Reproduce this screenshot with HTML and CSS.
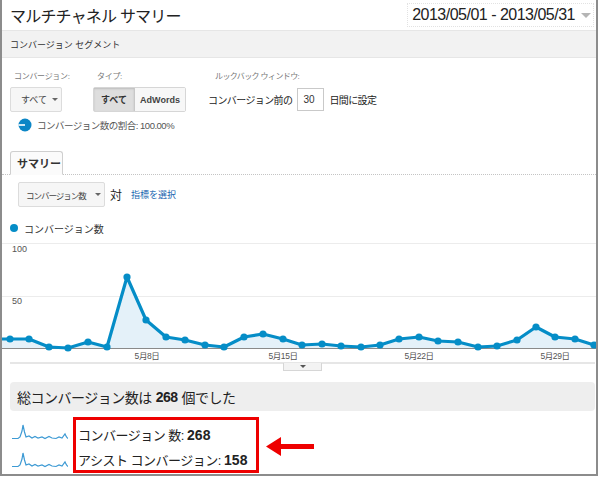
FILE: index.html
```html
<!DOCTYPE html>
<html lang="ja">
<head>
<meta charset="utf-8">
<title>マルチチャネル サマリー</title>
<link rel="stylesheet" href="styles.css">
</head>
<body>
<div class="frame">
  <div class="header">
    <div class="title">マルチチャネル サマリー</div>
    <div class="date"><span>2013/05/01 - 2013/05/31</span><span class="caret"></span></div>
  </div>
  <div class="segbar">コンバージョン セグメント</div>

  <div class="controls">
    <div class="lbl l1">コンバージョン:</div>
    <div class="lbl l2">タイプ:</div>
    <div class="lbl l3">ルックバック ウィンドウ:</div>
    <div class="btn sel">すべて <span class="tri"></span></div>
    <div class="toggle"><span class="on">すべて</span><span class="off">AdWords</span></div>
    <div class="lookback"><span>コンバージョン前の</span><span class="input">30</span><span>日間に設定</span></div>
  </div>

  <div class="share">
    <svg class="pie" width="14" height="14" viewBox="0 0 14 14"><circle cx="7" cy="7" r="6.5" fill="#0b86c6"/><line x1="0.5" y1="7" x2="7" y2="7" stroke="#fff" stroke-width="1.6"/></svg>
    <span>コンバージョン数の割合: 100.00%</span>
  </div>

  <div class="tabs"><div class="tab">サマリー</div></div>

  <div class="metricrow">
    <div class="btn metric"><span>コンバージョン数</span><span class="tri"></span></div>
    <span class="vs">対</span>
    <a class="pick">指標を選択</a>
  </div>

  <div class="legend"><span class="dot"></span><span>コンバージョン数</span></div>

  <svg class="chart" width="594" height="124" viewBox="2 238 594 124">
    <line x1="2" y1="243.5" x2="596" y2="243.5" stroke="#ececec"/>
    <line x1="2" y1="296.5" x2="596" y2="296.5" stroke="#ececec"/>
    <text x="12" y="252" class="ax">100</text>
    <text x="12" y="304" class="ax">50</text>
    <polygon fill="#e4f1f9" points="2,339 10,339 29,339 49,347 68,348 88,342 107,347 127,277 146,320 166,337 185,340 205,345 224,347 244,337 263,334 283,339 302,345 322,344 341,346 361,347 380,345 399,339 419,337 438,341 458,342 478,347 497,346 517,340 536,327 555,337 575,339 594,345 596,346 596,348 2,348"/>
    <line x1="2" y1="348.5" x2="596" y2="348.5" stroke="#8a8a8a"/>
    <polyline fill="none" stroke="#058dc7" stroke-width="3.2" stroke-linejoin="round" points="2,339 10,339 29,339 49,347 68,348 88,342 107,347 127,277 146,320 166,337 185,340 205,345 224,347 244,337 263,334 283,339 302,345 322,344 341,346 361,347 380,345 399,339 419,337 438,341 458,342 478,347 497,346 517,340 536,327 555,337 575,339 594,345"/>
    <g fill="#058dc7">
      <circle cx="10" cy="339" r="3.6"/><circle cx="29" cy="339" r="3.6"/><circle cx="49" cy="347" r="3.6"/><circle cx="68" cy="348" r="3.6"/><circle cx="88" cy="342" r="3.6"/><circle cx="107" cy="347" r="3.6"/><circle cx="127" cy="277" r="3.6"/><circle cx="146" cy="320" r="3.6"/><circle cx="166" cy="337" r="3.6"/><circle cx="185" cy="340" r="3.6"/><circle cx="205" cy="345" r="3.6"/><circle cx="224" cy="347" r="3.6"/><circle cx="244" cy="337" r="3.6"/><circle cx="263" cy="334" r="3.6"/><circle cx="283" cy="339" r="3.6"/><circle cx="302" cy="345" r="3.6"/><circle cx="322" cy="344" r="3.6"/><circle cx="341" cy="346" r="3.6"/><circle cx="361" cy="347" r="3.6"/><circle cx="380" cy="345" r="3.6"/><circle cx="399" cy="339" r="3.6"/><circle cx="419" cy="337" r="3.6"/><circle cx="438" cy="341" r="3.6"/><circle cx="458" cy="342" r="3.6"/><circle cx="478" cy="347" r="3.6"/><circle cx="497" cy="346" r="3.6"/><circle cx="517" cy="340" r="3.6"/><circle cx="536" cy="327" r="3.6"/><circle cx="555" cy="337" r="3.6"/><circle cx="575" cy="339" r="3.6"/><circle cx="594" cy="345" r="3.6"/>
    </g>
    <text x="147" y="359" class="xl">5月8日</text>
    <text x="283" y="359" class="xl">5月15日</text>
    <text x="419" y="359" class="xl">5月22日</text>
    <text x="555" y="359" class="xl">5月29日</text>
  </svg>

  <div class="slider"><div class="handle"><span class="tri dark"></span></div></div>

  <div class="total">総コンバージョン数は <b>268</b> 個でした</div>

  <div class="bottom">
    <div class="sparks">
      <svg width="56" height="18" viewBox="0 0 56 18"><path d="M0 15.5 L6 15.5 L8 14 L10 8 L11 2 L12.5 9 L14 14 L17 13 L20 15 L23 13.5 L26 15 L30 14 L33 15.5 L37 13.5 L40 15 L44 15.5 L47 14 L50 15 L53 11 L54.5 14 L56 15.5" fill="none" stroke="#3d9ad4" stroke-width="1.2"/></svg>
      <svg width="56" height="18" viewBox="0 0 56 18"><path d="M0 15.5 L6 15.5 L8 14 L10 8 L11 2 L12.5 9 L14 14 L17 13 L20 15 L23 13.5 L26 15 L30 14 L33 15.5 L37 13.5 L40 15 L44 15.5 L47 14 L50 15 L53 11 L54.5 14 L56 15.5" fill="none" stroke="#3d9ad4" stroke-width="1.2"/></svg>
    </div>
    <div class="redbox">
      <div class="kpi">コンバージョン 数: <b>268</b></div>
      <div class="kpi">アシスト コンバージョン: <b>158</b></div>
    </div>
    <svg class="arrow" width="48" height="19" viewBox="0 0 48 19"><path d="M0 9.5 L15 0 L15 7 L48 7 L48 12 L15 12 L15 19 Z" fill="#ee0000"/></svg>
  </div>
</div>
</body>
</html>
```

FILE: styles.css
```css
body {
  margin: 0;
  background: #fff;
  font-family: "Liberation Sans", "Noto Sans CJK JP", sans-serif;
  color: #222;
}

.frame {
  width: 598px;
  height: 476px;
  box-sizing: border-box;
  border: 2px solid #8c8c8c;
  border-top: 0;
  overflow: hidden;
}

.header {
  height: 30px;
  display: flex;
  align-items: center;
  justify-content: space-between;
  padding: 0 2px 0 8px;
}

.title {
  font-size: 16px;
  letter-spacing: -0.8px;
  color: #222;
}

.date {
  display: flex;
  align-items: center;
  gap: 6px;
  height: 22px;
  padding: 0 2px 0 4px;
  border: 1px dotted #e2e2e2;
  font-size: 16px;
  letter-spacing: -0.5px;
  color: #222;
}

.caret {
  width: 0;
  height: 0;
  border-left: 5px solid transparent;
  border-right: 5px solid transparent;
  border-top: 5px solid #b5b5b5;
}

.segbar {
  height: 26px;
  display: flex;
  align-items: center;
  padding-left: 8px;
  background: #f2f2f2;
  border-top: 1px solid #e6e6e6;
  border-bottom: 1px solid #e6e6e6;
  font-size: 9px;
  color: #333;
}

.controls {
  display: grid;
  grid-template-columns: 83px 115px auto;
  grid-template-rows: 14px 25px;
  row-gap: 5px;
  padding: 10px 0 0 8px;
}

.lbl {
  font-size: 8px;
  color: #777;
  display: flex;
  align-items: center;
  letter-spacing: -0.3px;
}

.l1 { padding-left: 4px; }
.l2 { padding-left: 4px; }
.l3 { padding-left: 7px; letter-spacing: -0.6px; }

.btn {
  box-sizing: border-box;
  display: flex;
  align-items: center;
  background: #f6f6f6;
  border: 1px solid #dcdcdc;
  border-radius: 2px;
  font-size: 9px;
  color: #444;
  white-space: nowrap;
}

.sel {
  width: 52px;
  padding-left: 10px;
  gap: 5px;
}

.tri {
  display: inline-block;
  width: 0;
  height: 0;
  border-left: 3px solid transparent;
  border-right: 3px solid transparent;
  border-top: 3px solid #666;
}

.toggle {
  display: flex;
  width: 93px;
  height: 25px;
  box-sizing: border-box;
  border: 1px solid #d6d6d6;
  border-radius: 2px;
  font-size: 9px;
  font-weight: bold;
  color: #333;
}

.toggle span {
  display: flex;
  align-items: center;
  justify-content: center;
}

.toggle .on {
  width: 40px;
  background: #dedede;
  border-right: 1px solid #c8c8c8;
  box-shadow: inset 0 1px 2px rgba(0,0,0,0.15);
}

.toggle .off {
  flex: 1;
  background: #f7f7f7;
  color: #444;
}

.lookback {
  display: flex;
  align-items: center;
  gap: 5px;
  font-size: 10px;
  letter-spacing: -0.6px;
  color: #222;
}

.input {
  box-sizing: border-box;
  width: 27px;
  height: 23px;
  border: 1px solid #c9c9c9;
  display: flex;
  align-items: center;
  padding-left: 5px;
  font-size: 10px;
  letter-spacing: 0;
  color: #333;
}

.share {
  display: flex;
  align-items: center;
  gap: 5px;
  height: 16px;
  margin-top: 5px;
  padding-left: 16px;
  font-size: 9.5px;
  letter-spacing: -0.5px;
  color: #555;
}

.tabs {
  margin-top: 18px;
  height: 23px;
  border-bottom: 1px dotted #c4c4c4;
  padding-left: 8px;
  display: flex;
  align-items: flex-end;
}

.tab {
  box-sizing: border-box;
  width: 53px;
  height: 24px;
  margin-bottom: -1px;
  background: #fbfbfb;
  border: 1px solid #cfcfcf;
  border-bottom: 1px solid #fbfbfb;
  border-radius: 3px 3px 0 0;
  display: flex;
  align-items: center;
  padding-left: 6px;
  font-size: 11px;
  font-weight: bold;
  color: #333;
}

.metricrow {
  display: flex;
  align-items: center;
  height: 25px;
  margin-top: 7px;
  padding-left: 16px;
}

.metric {
  width: 87px;
  height: 25px;
  padding-left: 7px;
  gap: 9px;
  font-size: 8.5px;
  letter-spacing: -1px;
}

.vs {
  margin-left: 5px;
  font-size: 12px;
  color: #222;
}

.pick {
  margin-left: 9px;
  font-size: 9px;
  color: #1a66b0;
}

.legend {
  display: flex;
  align-items: center;
  gap: 6px;
  height: 12px;
  margin-top: 15px;
  padding-left: 8px;
  font-size: 10px;
  color: #333;
}

.dot {
  width: 8px;
  height: 8px;
  border-radius: 50%;
  background: #058dc7;
}

.chart {
  display: block;
  margin-top: 4px;
}

.ax {
  font-family: "Liberation Sans", sans-serif;
  font-size: 9px;
  fill: #555;
}

.xl {
  font-size: 8.5px;
  fill: #555;
  text-anchor: middle;
  letter-spacing: -0.4px;
}

.slider {
  height: 8px;
  margin: 0 1px 0 8px;
  border-top: 2px solid #e6e6e6;
  display: flex;
  justify-content: center;
}

.handle {
  box-sizing: border-box;
  width: 39px;
  height: 8px;
  margin-top: -1px;
  background: #f3f3f3;
  border: 1px solid #d6d6d6;
  border-top: 0;
  display: flex;
  justify-content: center;
  align-items: center;
}

.dark { border-top-color: #555; }

.total {
  height: 29px;
  margin: 10px 1px 0 8px;
  background: #eeeeee;
  border-radius: 4px;
  display: flex;
  align-items: center;
  padding-left: 7px;
  font-size: 14px;
  letter-spacing: -0.5px;
  color: #222;
}

.total b { margin: 0 4px; }

.bottom {
  display: flex;
  align-items: flex-start;
  margin-top: 6px;
  padding-left: 10px;
}

.sparks {
  display: flex;
  flex-direction: column;
  gap: 10px;
  padding-top: 6px;
}

.sparks svg { display: block; }

.redbox {
  box-sizing: border-box;
  width: 186px;
  height: 56px;
  margin-left: 5px;
  border: 3px solid #ee0000;
  padding: 2px 0 0 2px;
}

.kpi {
  height: 25px;
  display: flex;
  align-items: center;
  font-size: 13px;
  letter-spacing: -0.5px;
  color: #222;
  white-space: pre;
}

.kpi b {
  font-size: 14px;
  letter-spacing: 0;
}

.arrow {
  display: block;
  margin: 20px 0 0 7px;
}
```
